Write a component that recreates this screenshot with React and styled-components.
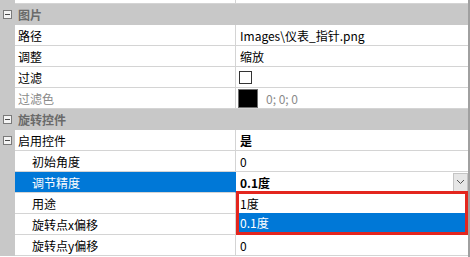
import React from "react";
import styled, { createGlobalStyle } from "styled-components";

const GlobalStyle = createGlobalStyle`
  html, body {
    margin: 0;
    padding: 0;
    background: #ffffff;
  }
  body {
    font-family: "Noto Sans CJK SC", "Noto Sans", sans-serif;
    font-size: 12px;
    color: #000000;
  }
`;

const Frame = styled.div`
  position: relative;
  width: 470px;
  height: 257px;
  overflow: hidden;
  background: #ffffff;
  border-right: 2px solid #a0a0a0;
  box-sizing: border-box;
`;

const Viewport = styled.div`
  display: flex;
  flex-direction: column;
  margin-top: -17px;
`;

const Row = styled.div`
  display: grid;
  grid-template-columns: 15px 220px 1fr;
  height: 21px;
`;

const Gutter = styled.div`
  display: flex;
  align-items: center;
  padding-left: 3px;
  background: #c8c8c8;
`;

const Toggle = styled.span`
  position: relative;
  width: 7px;
  height: 7px;
  border: 1px solid #7a7a7a;
  background: #f4f4f4;

  &::after {
    content: "";
    position: absolute;
    left: 1px;
    right: 1px;
    top: 3px;
    height: 1px;
    background: #4a4a4a;
  }
`;

const Name = styled.div`
  display: flex;
  align-items: center;
  padding-left: ${(p) => (p.$child ? 17 : 3)}px;
  border-bottom: 1px solid #d4d4d4;
  background: ${(p) => (p.$selected ? "#0078d7" : "#ffffff")};
  color: ${(p) => (p.$selected ? "#ffffff" : p.$disabled ? "#8a8a8a" : "#000000")};
  white-space: nowrap;
`;

const Value = styled.div`
  display: flex;
  align-items: center;
  gap: 8px;
  padding-left: ${(p) => (p.$tight ? 2 : 4)}px;
  border-left: 1px solid ${(p) => (p.$selected ? "#0078d7" : "#d4d4d4")};
  border-bottom: 1px solid #d4d4d4;
  font-weight: ${(p) => (p.$bold ? 700 : 400)};
  color: ${(p) => (p.$muted ? "#8a8a8a" : "#000000")};
  white-space: nowrap;
`;

const Category = styled.div`
  display: grid;
  grid-template-columns: 15px 1fr;
  height: 21px;
  background: #c8c8c8;
`;

const CategoryName = styled.div`
  display: flex;
  align-items: center;
  padding-left: 3px;
  font-weight: 700;
  color: #6a6a6a;
`;

const CheckBox = styled.span`
  width: 11px;
  height: 11px;
  border: 1px solid #333333;
  background: #ffffff;
`;

const Swatch = styled.span`
  width: 18px;
  height: 17px;
  border: 1px solid #6e6e6e;
  background: #000000;
`;

const Editor = styled(Value)`
  padding-right: 0;
  justify-content: space-between;
`;

const DropButton = styled.span`
  display: flex;
  align-items: center;
  justify-content: center;
  width: 15px;
  height: 19px;
  box-sizing: border-box;
  border: 1px solid #c4c4c4;
  background: #e6e6e6;
`;

const DropList = styled.div`
  position: absolute;
  left: 236px;
  top: 191px;
  width: 232px;
  height: 44px;
  box-sizing: border-box;
  border: 3px solid #e3261e;
  background: #ffffff;
  display: flex;
  flex-direction: column;
`;

const Option = styled.div`
  display: flex;
  align-items: center;
  flex: 1;
  padding-left: 1px;
  background: ${(p) => (p.$active ? "#0078d7" : "#ffffff")};
  color: ${(p) => (p.$active ? "#ffffff" : "#000000")};
`;

const Chevron = () => (
  <svg width="9" height="6" viewBox="0 0 9 6">
    <path d="M1 1 L4.5 4.5 L8 1" fill="none" stroke="#555" strokeWidth="1" />
  </svg>
);

const Prop = ({ name, child, disabled, toggle, children, ...rest }) => (
  <Row>
    <Gutter>{toggle && <Toggle />}</Gutter>
    <Name $child={child} $disabled={disabled}>
      {name}
    </Name>
    <Value {...rest}>{children}</Value>
  </Row>
);

const Group = ({ title }) => (
  <Category>
    <Gutter>
      <Toggle />
    </Gutter>
    <CategoryName>{title}</CategoryName>
  </Category>
);

export default function App() {
  return (
    <>
      <GlobalStyle />
      <Frame>
        <Viewport>
          <Prop name="" />
          <Group title="图片" />
          <Prop name="路径">Images\仪表_指针.png</Prop>
          <Prop name="调整">缩放</Prop>
          <Prop name="过滤" $tight>
            <CheckBox style={{ marginLeft: 1 }} />
          </Prop>
          <Prop name="过滤色" disabled $tight $muted>
            <Swatch />
            0; 0; 0
          </Prop>
          <Group title="旋转控件" />
          <Prop name="启用控件" toggle $bold>
            是
          </Prop>
          <Prop name="初始角度" child>
            0
          </Prop>
          <Row>
            <Gutter />
            <Name $child $selected>
              调节精度
            </Name>
            <Editor $selected $bold>
              0.1度
              <DropButton>
                <Chevron />
              </DropButton>
            </Editor>
          </Row>
          <Prop name="用途" child />
          <Prop name="旋转点x偏移" child />
          <Prop name="旋转点y偏移" child>
            0
          </Prop>
        </Viewport>
        <DropList>
          <Option>1度</Option>
          <Option $active>0.1度</Option>
        </DropList>
      </Frame>
    </>
  );
}
